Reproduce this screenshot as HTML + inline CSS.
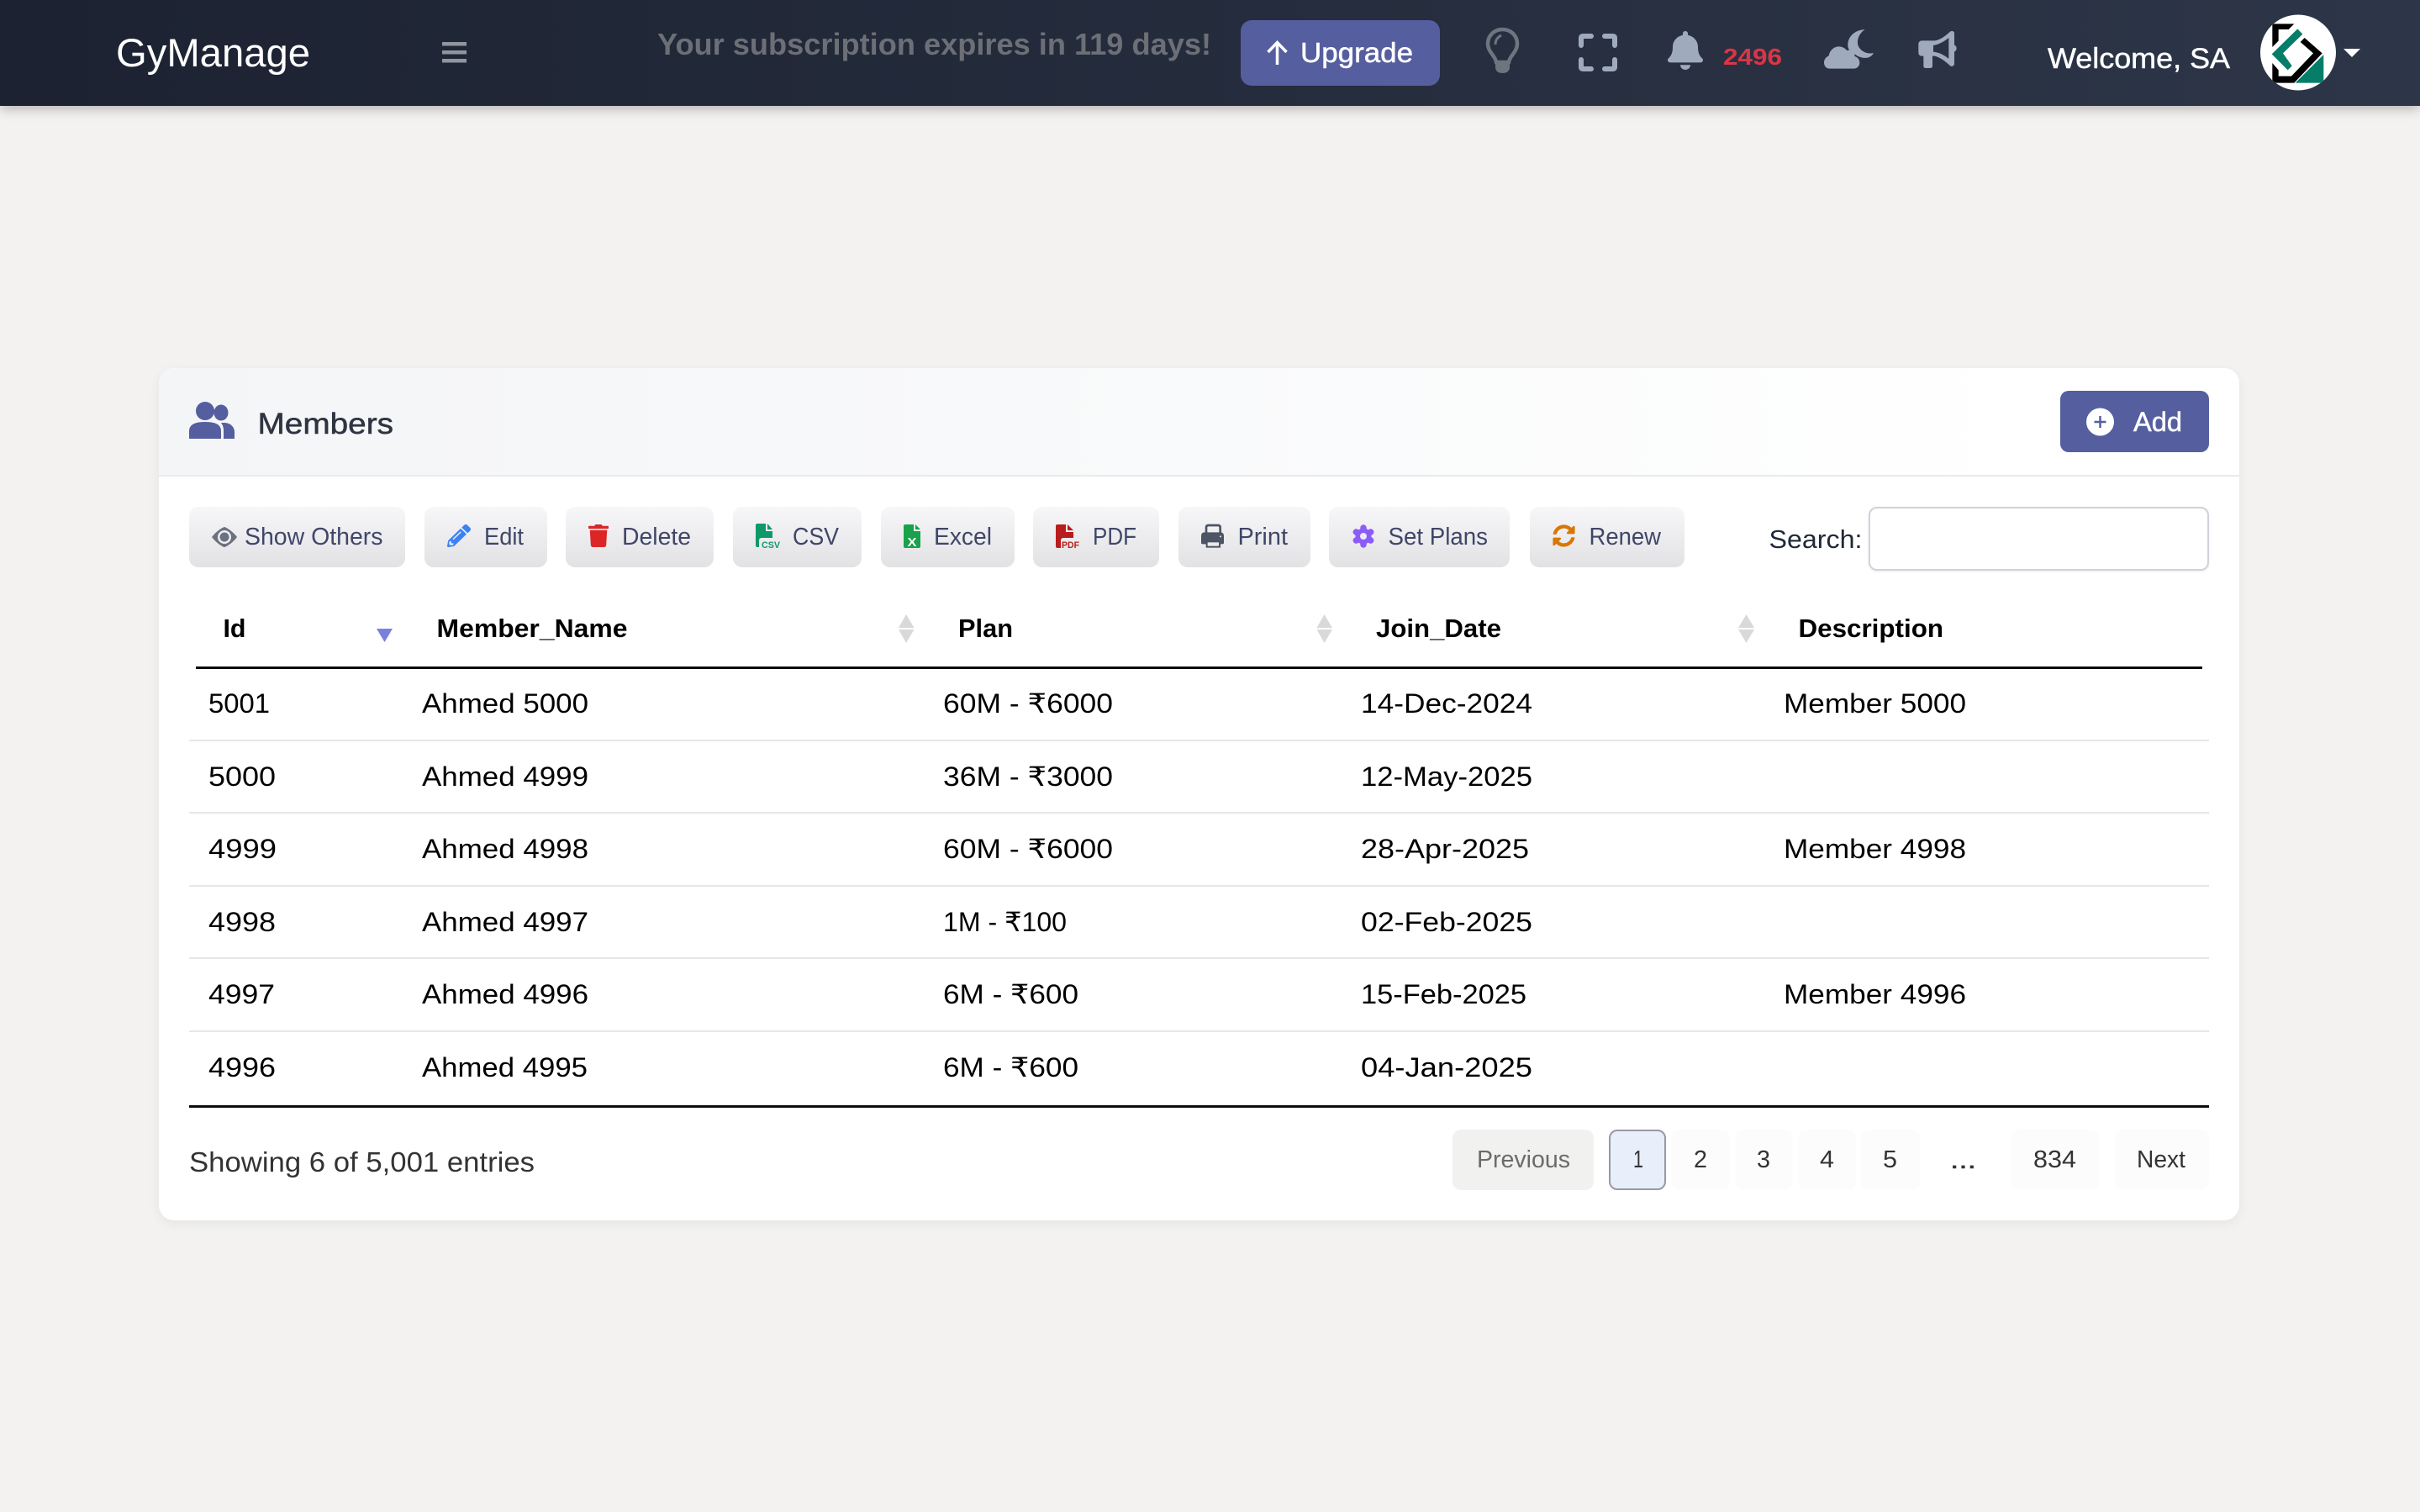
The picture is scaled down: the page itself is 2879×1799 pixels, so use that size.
<!DOCTYPE html>
<html lang="en"><head><meta charset="utf-8"><title>GyManage - Members</title>
<style>
html,body{margin:0;padding:0;background:#f3f2f0}
#p{position:relative;width:2879px;height:1799px;overflow:hidden;background:#f3f2f0;font-family:"Liberation Sans",sans-serif}
#p div{position:absolute;box-sizing:border-box}
.nav{left:0;top:0;width:2879px;height:126px;background:linear-gradient(90deg,#1c2231,#2d3648);box-shadow:0 3px 14px rgba(0,0,0,.28)}
.up{left:1476px;top:24px;width:237px;height:78px;background:#555e9f;border-radius:13px}
.card{left:189px;top:438px;width:2475px;height:1014px;background:#fff;border-radius:18px;box-shadow:0 4px 14px rgba(0,0,0,.06)}
.ch{left:189px;top:438px;width:2475px;height:129px;background:linear-gradient(90deg,#f4f5f7,#f9fafb 50%,#fff 90%);border-bottom:2px solid #e9eaec;border-radius:18px 18px 0 0}
.add{left:2451px;top:465px;width:177px;height:73px;background:#555e9f;border-radius:10px}
.b{top:603px;height:72px;background:linear-gradient(180deg,#f7f7f9,#e2e2e4);border-radius:11px}
.in{left:2223px;top:603px;width:405px;height:76px;background:#fff;border:2px solid #d0d3dc;border-radius:10px;box-shadow:0 1px 3px rgba(0,0,0,.08)}
.hr{left:225px;width:2403px;height:2px;background:#e7e7e7}
.pg{top:1344px;height:72px;background:#fcfcfc;border-radius:10px}
svg.o{position:absolute;left:0;top:0}
text{font-family:"Liberation Sans","DejaVu Sans",sans-serif}
.m{stroke:currentColor;stroke-width:.5px}
.t{font-size:32px;fill:#000}
.h{font-size:31px;font-weight:700;fill:#000}
.bt{font-size:29px;fill:#3f4668}
.pt{font-size:29px;fill:#333}
</style></head><body><div id="p">
<div class="nav"></div><div class="up"></div>
<div class="card"></div><div class="ch"></div><div class="add"></div>
<div class="b" style="left:225px;width:257px"></div>
<div class="b" style="left:505px;width:146px"></div>
<div class="b" style="left:673px;width:176px"></div>
<div class="b" style="left:872px;width:153px"></div>
<div class="b" style="left:1048px;width:159px"></div>
<div class="b" style="left:1229px;width:150px"></div>
<div class="b" style="left:1402px;width:157px"></div>
<div class="b" style="left:1581px;width:215px"></div>
<div class="b" style="left:1820px;width:184px"></div>
<div class="in"></div>
<div style="left:233px;top:793px;width:2387px;height:3px;background:#0c0c0c"></div>
<div class="hr" style="top:880px"></div><div class="hr" style="top:966px"></div><div class="hr" style="top:1053px"></div><div class="hr" style="top:1139px"></div><div class="hr" style="top:1226px"></div>
<div style="left:225px;top:1315px;width:2403px;height:3px;background:#0c0c0c"></div>
<div class="pg" style="left:1728px;width:168px;background:#f1f1ef"></div>
<div class="pg" style="left:1914px;width:68px;background:#e8eefa;border:2px solid #979aa3"></div>
<div class="pg" style="left:1988px;width:70px"></div>
<div class="pg" style="left:2064px;width:69px"></div>
<div class="pg" style="left:2139px;width:69px"></div>
<div class="pg" style="left:2214px;width:70px"></div>
<div class="pg" style="left:2393px;width:104px"></div>
<div class="pg" style="left:2515px;width:113px"></div>

<svg class="o" width="2879" height="1799" viewBox="0 0 2879 1799" xmlns="http://www.w3.org/2000/svg">
<defs><clipPath id="av"><circle cx="2734" cy="62.5" r="45"/></clipPath></defs>
<!-- NAV -->
<text x="138" y="79" font-size="47" fill="#fff" textLength="231" lengthAdjust="spacingAndGlyphs">GyManage</text>
<rect x="526" y="50" width="29" height="4.500" fill="#9095a0"/><rect x="526" y="60" width="29" height="4.500" fill="#9095a0"/><rect x="526" y="70" width="29" height="4.500" fill="#9095a0"/>
<text x="782" y="65" font-size="36" font-weight="700" fill="#6c6f76" textLength="659" lengthAdjust="spacingAndGlyphs">Your subscription expires in 119 days!</text>
<path d="M1519.500 77V51M1508.500 62L1519.500 50.500L1530.500 62" fill="none" stroke="#fff" stroke-width="3.500"/>
<text x="1547" y="74" font-size="33" fill="#fff" color="#fff" class="m" textLength="134" lengthAdjust="spacingAndGlyphs">Upgrade</text>
<!-- bulb -->
<path d="M1780 74C1779 66 1770 62 1770 52C1770 42 1778 35 1787.500 35C1797 35 1805 42 1805 52C1805 62 1796 66 1795 74Z" fill="none" stroke="#6b7680" stroke-width="4.500"/>
<path d="M1779 76H1796V81Q1795 87 1787.500 87Q1780 87 1779 81Z" fill="#6b7680"/>
<path d="M1779 53C1779 47 1782 44 1786 42" fill="none" stroke="#6b7680" stroke-width="3"/>
<!-- fullscreen -->
<path d="M1881 54V45Q1881 43 1883 43H1893M1909 43H1919Q1921 43 1921 45V54M1921 71V80Q1921 82 1919 82H1909M1893 82H1883Q1881 82 1881 80V71" fill="none" stroke="#9fabbc" stroke-width="6" stroke-linecap="round"/>
<!-- bell -->
<svg x="1984" y="37" width="42" height="46" viewBox="0 0 448 512" preserveAspectRatio="none"><path fill="#9fabbc" d="M224 512c35.320 0 63.970-28.650 63.970-64H160.030c0 35.350 28.650 64 63.970 64zm215.390-149.710c-19.320-20.760-55.470-51.990-55.470-154.290 0-77.700-54.480-139.900-127.940-155.160V32c0-17.670-14.320-32-31.980-32s-31.980 14.330-31.980 32v20.840C118.560 68.100 64.080 130.300 64.080 208c0 102.300-36.150 133.530-55.470 154.290-6 6.450-8.660 14.160-8.610 21.710.11 16.400 12.980 32 32.100 32h383.800c19.120 0 32-15.600 32.100-32 .05-7.550-2.610-15.270-8.610-21.710z"/></svg>
<text x="2050" y="77" font-size="28" font-weight="700" fill="#dc3545" textLength="70" lengthAdjust="spacingAndGlyphs">2496</text>
<!-- cloud moon / bullhorn, drawn in 3x crop coordinates -->
<svg x="2160" y="25" width="180" height="70" viewBox="0 0 540 210">
<path fill="#9fabbc" d="M176 30C140 32 115 55 115 85C115 92 116 96 118 100C125 105 135 112 142 120C152 128 170 134 185 131C195 129 203 122 207 114C185 120 160 108 152 88C145 65 158 42 176 30Z"/>
<path fill="#9fabbc" d="M50 170C38 170 30 160 30 148C30 136 38 128 47 124C50 105 66 91 82 91C96 91 106 98 113 106C120 100 132 102 138 112C140 118 140 122 139 126C150 128 157 138 157 149C157 161 148 170 136 170Z"/>
<path fill="#9fabbc" fill-rule="evenodd" d="M380 70H425C445 68 465 52 480 38Q490 32 495 42V85Q503 90 503 97Q503 105 495 110V155Q490 165 480 160C465 145 445 130 425 125H417V160Q417 168 408 168H394Q385 168 385 160V125H380Q367 125 367 112V83Q367 70 380 70ZM420 87V110C440 112 460 122 475 135V60C460 72 440 84 420 87Z"/>
</svg>
<text x="2436" y="81" font-size="34" fill="#fff" color="#fff" class="m" textLength="217" lengthAdjust="spacingAndGlyphs">Welcome, SA</text>
<!-- avatar: coordinates are 3x crop from (2640,0) -->
<circle cx="2734" cy="62.500" r="45" fill="#fff"/>
<g clip-path="url(#av)"><g transform="translate(2640,0) scale(.3333)">
<path fill="#000" d="M190 85H268L248 105H212V146L190 168ZM190 225L212 250V272H258L336 190L290 150L305 135L368 190L268 296H190Z"/>
<path fill="#067d68" d="M280 103L298 122L228 190L260 235L245 250L188 193ZM373 195V296H272Z"/>
</g></g>
<path d="M2788 58H2808L2798 68Z" fill="#fff"/>
<!-- CARD HEADER -->
<ellipse cx="263" cy="491" rx="8.500" ry="9.500" fill="#555e9f"/><ellipse cx="244" cy="489" rx="11" ry="11" fill="#555e9f"/>
<path d="M225 522V513C225 505 232 502 244 502C256 502 263 505 263 513V522Z" fill="#555e9f"/>
<path d="M267 503C274 503 279 508 279 514V522H266V512Q266 507 263 503Z" fill="#555e9f"/>
<text x="306.500" y="516" font-size="35" fill="#2e3440" color="#2e3440" class="m" textLength="161.500" lengthAdjust="spacingAndGlyphs">Members</text>
<circle cx="2498.500" cy="502" r="16.500" fill="#fff"/><path d="M2491.500 502H2505.500M2498.500 495V509" stroke="#555e9f" stroke-width="2.500"/>
<text x="2538" y="513" font-size="32" fill="#fff" color="#fff" class="m" textLength="58" lengthAdjust="spacingAndGlyphs">Add</text>
<!-- BUTTONS -->
<path d="M252 639C258 631 266 627 267 627C268 627 276 631 282 639C276 647 268 651 267 651C266 651 258 647 252 639Z" fill="#6b7280"/><circle cx="267" cy="639" r="8" fill="#eeeef0"/><circle cx="267" cy="639" r="5.500" fill="#6b7280"/>
<text class="bt" x="291" y="648" textLength="164.500" lengthAdjust="spacingAndGlyphs">Show Others</text>
<svg x="532" y="624" width="28" height="27" viewBox="0 0 512 512" preserveAspectRatio="none"><path fill="#3b82f6" d="M497.900 142.100l-46.100 46.100c-4.700 4.700-12.300 4.700-17 0l-111-111c-4.700-4.700-4.700-12.300 0-17l46.100-46.100c18.700-18.700 49.100-18.700 67.900 0l60.100 60.100c18.800 18.700 18.800 49.100 0 67.900zM284.200 99.800L21.600 362.400.4 483.900c-2.900 16.400 11.400 30.600 27.800 27.800l121.500-21.300 262.600-262.600c4.700-4.700 4.700-12.300 0-17l-111-111c-4.800-4.700-12.400-4.700-17.100 0zM124.100 339.900c-5.500-5.500-5.500-14.300 0-19.800l154-154c5.500-5.500 14.300-5.500 19.800 0s5.500 14.300 0 19.800l-154 154c-5.500 5.500-14.300 5.500-19.800 0zM88 424h48v36.300l-64.500 11.300-31.100-31.100L51.700 376H88v48z"/></svg>
<text class="bt" x="576" y="648" textLength="47" lengthAdjust="spacingAndGlyphs">Edit</text>
<svg x="700" y="624" width="24" height="27" viewBox="0 0 448 512" preserveAspectRatio="none"><path fill="#dc2626" d="M432 32H312l-9.400-18.700A24 24 0 0 0 281.100 0H166.800a23.720 23.720 0 0 0-21.400 13.300L136 32H16A16 16 0 0 0 0 48v32a16 16 0 0 0 16 16h416a16 16 0 0 0 16-16V48a16 16 0 0 0-16-16zM53.200 467a48 48 0 0 0 47.900 45h245.800a48 48 0 0 0 47.900-45L416 128H32z"/></svg>
<text class="bt" x="740" y="648" textLength="82" lengthAdjust="spacingAndGlyphs">Delete</text>
<path d="M901 623H911V632H919V640H906Q903 640 903 643V651H901Q899 651 899 649V625Q899 623 901 623ZM913 623L919 630H913Z" fill="#0f9968"/>
<text x="906" y="652" font-size="11" font-weight="700" fill="#0f9968" textLength="22" lengthAdjust="spacingAndGlyphs">CSV</text>
<text class="bt" x="943" y="648" textLength="55" lengthAdjust="spacingAndGlyphs">CSV</text>
<path d="M1077 624H1087V632H1095V650Q1095 652 1093 652H1077Q1075 652 1075 650V626Q1075 624 1077 624ZM1089 624L1095 630H1089Z" fill="#16a34a"/>
<text x="1079.500" y="650" font-size="15" font-weight="700" fill="#fff" textLength="11" lengthAdjust="spacingAndGlyphs">X</text>
<text class="bt" x="1111" y="648" textLength="69" lengthAdjust="spacingAndGlyphs">Excel</text>
<path d="M1258 624H1268V633H1277V640H1265Q1262 640 1262 643V652H1258Q1256 652 1256 650V626Q1256 624 1258 624ZM1270 624L1277 631H1270Z" fill="#b91c1c"/>
<text x="1263" y="652" font-size="11" font-weight="700" fill="#b91c1c" textLength="21" lengthAdjust="spacingAndGlyphs">PDF</text>
<text class="bt" x="1300" y="648" textLength="52" lengthAdjust="spacingAndGlyphs">PDF</text>
<svg x="1420" y="610" width="80" height="60" viewBox="0 0 240 180">
<path d="M45 72V53Q45 45 53 45H87Q95 45 95 53V72" fill="none" stroke="#4b5563" stroke-width="8"/>
<path fill="#4b5563" d="M40 70H95Q108 70 108 83V108Q108 112 102 112H93V103H47V112H33Q27 112 27 108V83Q27 70 40 70Z"/><rect x="47" y="103" width="46" height="19" fill="none" stroke="#4b5563" stroke-width="6"/><circle cx="96" cy="85" r="3" fill="#eee"/></svg>
<text class="bt" x="1472.500" y="648" textLength="59.500" lengthAdjust="spacingAndGlyphs">Print</text>
<g fill="#8b5cf6"><circle cx="1622" cy="638" r="9.500"/><g stroke="#8b5cf6" stroke-width="7.500" stroke-linecap="round"><path d="M1622 628V648"/><path d="M1622 628V648" transform="rotate(60 1622 638)"/><path d="M1622 628V648" transform="rotate(120 1622 638)"/></g></g><circle cx="1622" cy="638" r="4" fill="#ececee"/>
<text class="bt" x="1651.500" y="648" textLength="118.500" lengthAdjust="spacingAndGlyphs">Set Plans</text>
<svg x="1847" y="624" width="27" height="27" viewBox="0 0 512 512" preserveAspectRatio="none"><path fill="#d97706" d="M370.720 133.280C339.458 104.008 298.888 87.962 255.848 88c-77.458.068-144.328 53.178-162.791 126.850-1.344 5.363-6.122 9.150-11.651 9.150H24.103c-7.498 0-13.194-6.807-11.807-14.176C33.933 94.924 134.813 8 256 8c66.448 0 126.791 26.136 171.315 68.685L463.030 40.970C478.149 25.851 504 36.559 504 57.941V192c0 13.255-10.745 24-24 24H345.941c-21.382 0-32.090-25.851-16.971-40.971l41.750-41.749zM32 296h134.059c21.382 0 32.090 25.851 16.971 40.971l-41.750 41.750c31.262 29.273 71.835 45.319 114.876 45.280 77.418-.07 144.315-53.144 162.787-126.849 1.344-5.363 6.122-9.150 11.651-9.150h57.304c7.498 0 13.194 6.807 11.807 14.176C478.067 417.076 377.187 504 256 504c-66.448 0-126.791-26.136-171.315-68.685L48.970 471.030C33.851 486.149 8 475.441 8 454.059V320c0-13.255 10.745-24 24-24z"/></svg>
<text class="bt" x="1890.500" y="648" textLength="85.500" lengthAdjust="spacingAndGlyphs">Renew</text>
<text x="2104.500" y="652" font-size="31" fill="#1f2937" textLength="111" lengthAdjust="spacingAndGlyphs">Search:</text>
<!-- HEAD -->
<text class="h" x="265.500" y="758" textLength="27" lengthAdjust="spacingAndGlyphs">Id</text>
<path d="M448 748H467L457.500 764Z" fill="#7b7fe0"/>
<text class="h" x="519.500" y="758" textLength="227" lengthAdjust="spacingAndGlyphs">Member_Name</text>
<path d="M1069 747L1078 731L1087.500 747ZM1069 749H1087.500L1078 765Z" fill="#d9d9d9"/>
<text class="h" x="1140" y="758" textLength="65" lengthAdjust="spacingAndGlyphs">Plan</text>
<path d="M1566.500 747L1575.500 731L1585 747ZM1566.500 749H1585L1575.500 765Z" fill="#d9d9d9"/>
<text class="h" x="1637" y="758" textLength="149" lengthAdjust="spacingAndGlyphs">Join_Date</text>
<path d="M2068 747L2077.500 731L2087 747ZM2068 749H2087L2077.500 765Z" fill="#d9d9d9"/>
<text class="h" x="2139.500" y="758" textLength="172.500" lengthAdjust="spacingAndGlyphs">Description</text>
<!-- ROWS -->
<text class="t" x="248" y="848" textLength="73" lengthAdjust="spacingAndGlyphs">5001</text><text class="t" x="502" y="848" textLength="198" lengthAdjust="spacingAndGlyphs">Ahmed 5000</text><text class="t" x="1122" y="848" textLength="202" lengthAdjust="spacingAndGlyphs">60M - ₹6000</text><text class="t" x="1619" y="848" textLength="204" lengthAdjust="spacingAndGlyphs">14-Dec-2024</text><text class="t" x="2122" y="848" textLength="217" lengthAdjust="spacingAndGlyphs">Member 5000</text>
<text class="t" x="248" y="935" textLength="80" lengthAdjust="spacingAndGlyphs">5000</text><text class="t" x="502" y="935" textLength="198" lengthAdjust="spacingAndGlyphs">Ahmed 4999</text><text class="t" x="1122" y="935" textLength="202" lengthAdjust="spacingAndGlyphs">36M - ₹3000</text><text class="t" x="1619" y="935" textLength="204" lengthAdjust="spacingAndGlyphs">12-May-2025</text>
<text class="t" x="248" y="1021" textLength="81" lengthAdjust="spacingAndGlyphs">4999</text><text class="t" x="502" y="1021" textLength="198" lengthAdjust="spacingAndGlyphs">Ahmed 4998</text><text class="t" x="1122" y="1021" textLength="202" lengthAdjust="spacingAndGlyphs">60M - ₹6000</text><text class="t" x="1619" y="1021" textLength="200" lengthAdjust="spacingAndGlyphs">28-Apr-2025</text><text class="t" x="2122" y="1021" textLength="217" lengthAdjust="spacingAndGlyphs">Member 4998</text>
<text class="t" x="248" y="1108" textLength="80" lengthAdjust="spacingAndGlyphs">4998</text><text class="t" x="502" y="1108" textLength="198" lengthAdjust="spacingAndGlyphs">Ahmed 4997</text><text class="t" x="1122" y="1108" textLength="147" lengthAdjust="spacingAndGlyphs">1M - ₹100</text><text class="t" x="1619" y="1108" textLength="204" lengthAdjust="spacingAndGlyphs">02-Feb-2025</text>
<text class="t" x="248" y="1194" textLength="79" lengthAdjust="spacingAndGlyphs">4997</text><text class="t" x="502" y="1194" textLength="198" lengthAdjust="spacingAndGlyphs">Ahmed 4996</text><text class="t" x="1122" y="1194" textLength="161" lengthAdjust="spacingAndGlyphs">6M - ₹600</text><text class="t" x="1619" y="1194" textLength="197" lengthAdjust="spacingAndGlyphs">15-Feb-2025</text><text class="t" x="2122" y="1194" textLength="217" lengthAdjust="spacingAndGlyphs">Member 4996</text>
<text class="t" x="248" y="1281" textLength="80" lengthAdjust="spacingAndGlyphs">4996</text><text class="t" x="502" y="1281" textLength="197" lengthAdjust="spacingAndGlyphs">Ahmed 4995</text><text class="t" x="1122" y="1281" textLength="161" lengthAdjust="spacingAndGlyphs">6M - ₹600</text><text class="t" x="1619" y="1281" textLength="204" lengthAdjust="spacingAndGlyphs">04-Jan-2025</text>
<!-- FOOT -->
<text x="225" y="1394" font-size="33" fill="#333" textLength="411" lengthAdjust="spacingAndGlyphs">Showing 6 of 5,001 entries</text>
<text class="pt" x="1757" y="1389" style="fill:#6b6b6b" textLength="111" lengthAdjust="spacingAndGlyphs">Previous</text>
<text class="pt" x="1943" y="1389" textLength="12" lengthAdjust="spacingAndGlyphs">1</text>
<text class="pt" x="2015" y="1389" textLength="16" lengthAdjust="spacingAndGlyphs">2</text>
<text class="pt" x="2090" y="1389" textLength="16" lengthAdjust="spacingAndGlyphs">3</text>
<text class="pt" x="2165" y="1389" textLength="17" lengthAdjust="spacingAndGlyphs">4</text>
<text class="pt" x="2240" y="1389" textLength="17" lengthAdjust="spacingAndGlyphs">5</text>
<text class="pt m" x="2320" y="1390" color="#333" textLength="31" lengthAdjust="spacingAndGlyphs">...</text>
<text class="pt" x="2419" y="1389" textLength="51" lengthAdjust="spacingAndGlyphs">834</text>
<text class="pt" x="2542" y="1389" textLength="58" lengthAdjust="spacingAndGlyphs">Next</text>
</svg>
</div></body></html>
